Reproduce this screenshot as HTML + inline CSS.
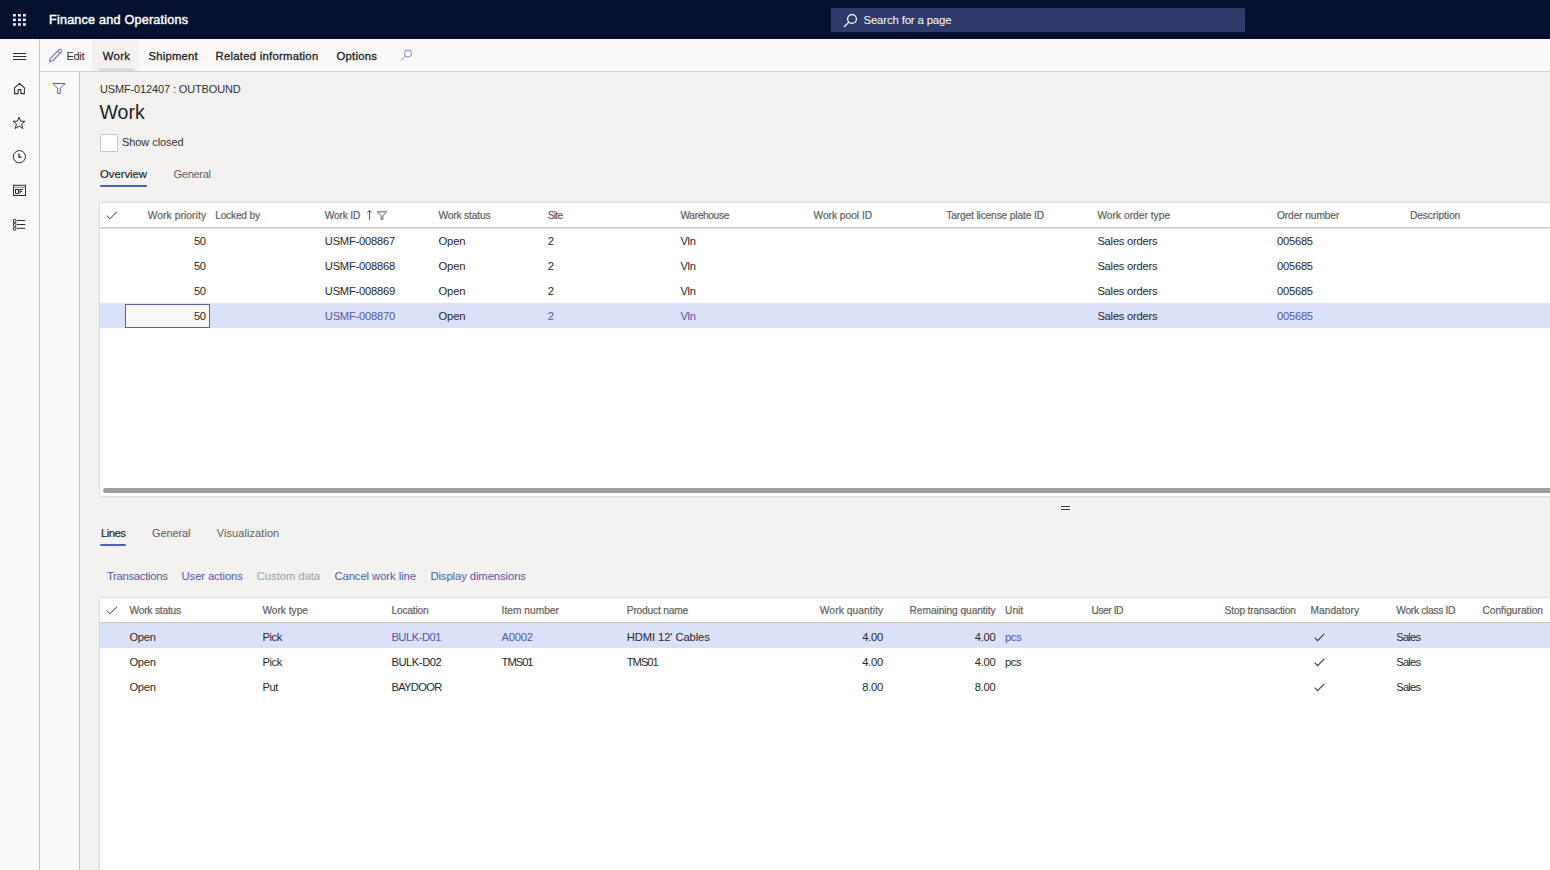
<!DOCTYPE html>
<html><head><meta charset="utf-8">
<style>
*{box-sizing:border-box;margin:0;padding:0}
html,body{width:1550px;height:870px;overflow:hidden;font-family:"Liberation Sans",sans-serif;background:#f3f2f1;color:#201f1e}
.a{position:absolute;white-space:nowrap}
.b{position:absolute}
</style></head><body>
<div class="b" style="left:0;top:0;width:1550px;height:39px;background:#06102f"></div>
<svg class="b" style="left:13px;top:14px" width="13" height="12" viewBox="0 0 13 12" fill="#fff"><rect x="0" y="0" width="2.8" height="2.5"/><rect x="5" y="0" width="2.8" height="2.5"/><rect x="10" y="0" width="2.8" height="2.5"/><rect x="0" y="4.6" width="2.8" height="2.5"/><rect x="5" y="4.6" width="2.8" height="2.5"/><rect x="10" y="4.6" width="2.8" height="2.5"/><rect x="0" y="9.2" width="2.8" height="2.5"/><rect x="5" y="9.2" width="2.8" height="2.5"/><rect x="10" y="9.2" width="2.8" height="2.5"/></svg>
<div class="a" style="left:49.0px;top:13.8px;font-size:12.6px;line-height:12.6px;color:#fff;letter-spacing:0.218px;-webkit-text-stroke:0.45px #fff;">Finance and Operations</div>
<div class="b" style="left:831px;top:7.5px;width:414px;height:24.2px;background:#2f3b6a;border-radius:1.5px"></div>
<svg class="b" style="left:842px;top:12px" width="16" height="16" viewBox="0 0 16 16" fill="none" stroke="#fff" stroke-width="1.3"><circle cx="10" cy="7" r="4.4"/><line x1="6.9" y1="10.1" x2="2" y2="15"/></svg>
<div class="a" style="left:863.5px;top:14.8px;font-size:11.4px;line-height:11.4px;color:#fff;letter-spacing:-0.160px;">Search for a page</div>
<div class="b" style="left:0;top:39px;width:40px;height:831px;background:#faf9f8;border-right:1px solid #c8c6c4"></div>
<div class="b" style="left:40px;top:39px;width:1510px;height:33px;background:#faf9f8;border-bottom:1px solid #d2d0ce"></div>
<div class="b" style="left:40px;top:72px;width:40px;height:798px;background:#faf9f8;border-right:1px solid #c8c6c4"></div>
<svg class="b" style="left:12px;top:50px" width="16" height="12" viewBox="0 0 16 12" stroke="#2f2a38" stroke-width="1"><line x1="1" y1="3.5" x2="14.3" y2="3.5"/><line x1="1" y1="6.5" x2="14.3" y2="6.5"/><line x1="1" y1="9.5" x2="14.3" y2="9.5"/></svg>
<svg class="b" style="left:12px;top:82px" width="15" height="14" viewBox="0 0 15 14" fill="none" stroke="#2f2a38" stroke-width="1.05" stroke-linejoin="round"><path d="M2 6.3 L7.5 1.3 L13 6.3 M2.6 5.8 V11.6 H6.1 V7.6 H8.9 V11.6 H12.4 V5.8"/></svg>
<svg class="b" style="left:12px;top:116px" width="14" height="14" viewBox="0 0 14 14" fill="none" stroke="#2f2a38" stroke-width="1"><path d="M7 1 L8.6 5.2 L13 5.3 L9.5 8.1 L10.8 12.6 L7 10 L3.2 12.6 L4.5 8.1 L1 5.3 L5.4 5.2 Z"/></svg>
<svg class="b" style="left:12px;top:149px" width="15" height="15" viewBox="0 0 15 15" fill="none" stroke="#2f2a38" stroke-width="1"><circle cx="7.4" cy="7.7" r="6.1"/><path d="M7 4.6 V8 H9.3" stroke-width="1.3"/></svg>
<svg class="b" style="left:12px;top:184px" width="15" height="13" viewBox="0 0 15 13" fill="none" stroke="#2f2a38" stroke-width="1"><rect x="1.5" y="1.3" width="12" height="10.2"/><line x1="1.5" y1="3.3" x2="13.5" y2="3.3" stroke="#8a8886"/><rect x="3.5" y="5.5" width="3" height="4"/><path d="M8 9.5 V5.5 H11 M8 7.5 H10"/></svg>
<svg class="b" style="left:12px;top:218px" width="15" height="14" viewBox="0 0 15 14" fill="none" stroke="#2f2a38" stroke-width="1"><rect x="1.5" y="1.5" width="2.4" height="3.2" rx="0.6"/><rect x="1.5" y="5.2" width="2.4" height="3.2" rx="0.6"/><rect x="1.5" y="8.9" width="2.4" height="3.2" rx="0.6"/><line x1="5" y1="2.5" x2="13.2" y2="2.5"/><line x1="5" y1="6.5" x2="13.2" y2="6.5"/><line x1="5" y1="10.3" x2="13.2" y2="10.3"/></svg>
<svg class="b" style="left:48px;top:48px" width="15" height="15" viewBox="0 0 15 15" fill="none" stroke="#7377c6" stroke-width="1.1"><path d="M1.5 13.5 L2.6 10 L10.8 1.8 Q12 0.8 13.1 1.9 Q14.2 3 13.2 4.2 L5 12.4 Z M9.6 3 L12 5.4"/></svg>
<div class="a" style="left:66.5px;top:51.0px;font-size:11.2px;line-height:11.2px;color:#323130;letter-spacing:-0.427px;">Edit</div>
<div class="b" style="left:92px;top:40px;width:47px;height:31px;background:#f3f2f1"></div>
<div class="b" style="left:99px;top:68px;width:35px;height:3px;background:#dedcda"></div>
<div class="a" style="left:102.8px;top:51.2px;font-size:11.3px;line-height:11.3px;color:#201f1e;letter-spacing:0.348px;-webkit-text-stroke:0.3px #201f1e;">Work</div>
<div class="a" style="left:148.4px;top:51.2px;font-size:11.3px;line-height:11.3px;color:#201f1e;letter-spacing:0.224px;-webkit-text-stroke:0.3px #201f1e;">Shipment</div>
<div class="a" style="left:215.6px;top:51.2px;font-size:11.3px;line-height:11.3px;color:#201f1e;letter-spacing:0.257px;-webkit-text-stroke:0.3px #201f1e;">Related information</div>
<div class="a" style="left:336.5px;top:51.2px;font-size:11.3px;line-height:11.3px;color:#201f1e;letter-spacing:0.244px;-webkit-text-stroke:0.3px #201f1e;">Options</div>
<svg class="b" style="left:400px;top:49px" width="13" height="12" viewBox="0 0 13 12" fill="none" stroke="#7d80d2" stroke-width="1"><circle cx="8" cy="4.5" r="3.6"/><line x1="5.4" y1="7.1" x2="1" y2="11.5"/></svg>
<svg class="b" style="left:52px;top:82px" width="14" height="13" viewBox="0 0 14 13" fill="none" stroke="#5558b8" stroke-width="1"><path d="M1 1.5 H13 L8.3 6.3 V11.5 H5.7 V6.3 Z"/></svg>
<div class="a" style="left:100.0px;top:84.1px;font-size:11px;line-height:11px;color:#323130;letter-spacing:-0.141px;">USMF-012407 : OUTBOUND</div>
<div class="a" style="left:99.5px;top:102.5px;font-size:19.5px;line-height:19.5px;color:#201f1e;">Work</div>
<div class="b" style="left:100px;top:134px;width:18px;height:18px;background:#fff;border:1px solid #c8c6c4;border-radius:1px"></div>
<div class="a" style="left:122.0px;top:136.6px;font-size:11px;line-height:11px;color:#323130;letter-spacing:-0.067px;">Show closed</div>
<div class="a" style="left:100.0px;top:169.0px;font-size:11.3px;line-height:11.3px;color:#201f1e;letter-spacing:-0.013px;-webkit-text-stroke:0.15px #201f1e;">Overview</div>
<div class="b" style="left:100px;top:184.5px;width:47px;height:2.5px;background:#4f5bbf;border-radius:1px"></div>
<div class="a" style="left:173.5px;top:169.0px;font-size:11px;line-height:11px;color:#605e5c;letter-spacing:-0.273px;">General</div>
<div class="b" style="left:100px;top:203px;width:1450px;height:293px;background:#fff;box-shadow:0 0 2px rgba(0,0,0,.28)"></div>
<div class="b" style="left:100px;top:226.5px;width:1450px;height:1px;background:#c8c6c4"></div>
<div class="b" style="left:100px;top:227.5px;width:1450px;height:1px;background:#e6e4e2"></div>
<div class="b" style="left:100px;top:303px;width:1450px;height:25px;background:#dae1f8"></div>
<div class="b" style="left:125px;top:303.5px;width:85px;height:24.5px;background:#faf9f8;border:1px solid #5a5ea8"></div>
<div class="b" style="left:103px;top:488px;width:1452px;height:4.5px;background:#9e9e9e;border-radius:2.5px"></div>
<svg class="b" style="left:106px;top:211px" width="12" height="9" viewBox="0 0 12 9" fill="none" stroke="#323130" stroke-width="1"><path d="M0.8 4.5 L3.8 7.8 L11 0.8"/></svg>
<div class="a" style="right:1343.9px;top:211.0px;font-size:10.2px;line-height:10.2px;color:#605e5c;letter-spacing:0.101px;-webkit-text-stroke:0.2px #605e5c;">Work priority</div>
<div class="a" style="left:215.2px;top:211.0px;font-size:10.2px;line-height:10.2px;color:#605e5c;letter-spacing:-0.207px;-webkit-text-stroke:0.2px #605e5c;">Locked by</div>
<div class="a" style="left:324.8px;top:211.0px;font-size:10.2px;line-height:10.2px;color:#605e5c;letter-spacing:-0.168px;-webkit-text-stroke:0.2px #605e5c;">Work ID</div>
<div class="a" style="left:438.4px;top:211.0px;font-size:10.2px;line-height:10.2px;color:#605e5c;letter-spacing:-0.139px;-webkit-text-stroke:0.2px #605e5c;">Work status</div>
<div class="a" style="left:547.7px;top:211.0px;font-size:10.2px;line-height:10.2px;color:#605e5c;letter-spacing:-0.688px;-webkit-text-stroke:0.2px #605e5c;">Site</div>
<div class="a" style="left:680.5px;top:211.0px;font-size:10.2px;line-height:10.2px;color:#605e5c;letter-spacing:-0.365px;-webkit-text-stroke:0.2px #605e5c;">Warehouse</div>
<div class="a" style="left:813.5px;top:211.0px;font-size:10.2px;line-height:10.2px;color:#605e5c;letter-spacing:-0.009px;-webkit-text-stroke:0.2px #605e5c;">Work pool ID</div>
<div class="a" style="left:946.2px;top:211.0px;font-size:10.2px;line-height:10.2px;color:#605e5c;letter-spacing:-0.136px;-webkit-text-stroke:0.2px #605e5c;">Target license plate ID</div>
<div class="a" style="left:1097.4px;top:211.0px;font-size:10.2px;line-height:10.2px;color:#605e5c;letter-spacing:0.029px;-webkit-text-stroke:0.2px #605e5c;">Work order type</div>
<div class="a" style="left:1277.0px;top:211.0px;font-size:10.2px;line-height:10.2px;color:#605e5c;letter-spacing:-0.102px;-webkit-text-stroke:0.2px #605e5c;">Order number</div>
<div class="a" style="left:1409.9px;top:211.0px;font-size:10.2px;line-height:10.2px;color:#605e5c;letter-spacing:-0.057px;-webkit-text-stroke:0.2px #605e5c;">Description</div>
<svg class="b" style="left:366px;top:209px" width="7" height="11" viewBox="0 0 7 11" fill="none" stroke="#605e5c" stroke-width="1"><path d="M3.5 10.8 V1.5 M1.3 3.7 L3.5 1.3 L5.7 3.7"/></svg>
<svg class="b" style="left:377px;top:209.5px" width="10" height="10" viewBox="0 0 10 10" fill="none" stroke="#605e5c" stroke-width="1"><path d="M0.5 1.8 H9.5 L5.9 5.8 V9.3 H4.1 V5.8 Z"/></svg>
<div class="a" style="right:1344.5px;top:236.2px;font-size:11.2px;line-height:11.2px;color:#292827;letter-spacing:-0.453px;">50</div>
<div class="a" style="left:324.8px;top:236.2px;font-size:11.2px;line-height:11.2px;color:#292827;letter-spacing:-0.237px;">USMF-008867</div>
<div class="a" style="left:438.4px;top:236.2px;font-size:11.2px;line-height:11.2px;color:#292827;letter-spacing:-0.092px;">Open</div>
<div class="a" style="left:547.7px;top:236.2px;font-size:11.2px;line-height:11.2px;color:#292827;">2</div>
<div class="a" style="left:680.5px;top:236.2px;font-size:11.2px;line-height:11.2px;color:#292827;letter-spacing:-0.386px;">Vln</div>
<div class="a" style="left:1097.4px;top:236.2px;font-size:11.2px;line-height:11.2px;color:#292827;letter-spacing:-0.228px;">Sales orders</div>
<div class="a" style="left:1277.0px;top:236.2px;font-size:11.2px;line-height:11.2px;color:#292827;letter-spacing:-0.249px;">005685</div>
<div class="a" style="right:1344.5px;top:261.2px;font-size:11.2px;line-height:11.2px;color:#292827;letter-spacing:-0.453px;">50</div>
<div class="a" style="left:324.8px;top:261.2px;font-size:11.2px;line-height:11.2px;color:#292827;letter-spacing:-0.237px;">USMF-008868</div>
<div class="a" style="left:438.4px;top:261.2px;font-size:11.2px;line-height:11.2px;color:#292827;letter-spacing:-0.092px;">Open</div>
<div class="a" style="left:547.7px;top:261.2px;font-size:11.2px;line-height:11.2px;color:#292827;">2</div>
<div class="a" style="left:680.5px;top:261.2px;font-size:11.2px;line-height:11.2px;color:#292827;letter-spacing:-0.386px;">Vln</div>
<div class="a" style="left:1097.4px;top:261.2px;font-size:11.2px;line-height:11.2px;color:#292827;letter-spacing:-0.228px;">Sales orders</div>
<div class="a" style="left:1277.0px;top:261.2px;font-size:11.2px;line-height:11.2px;color:#292827;letter-spacing:-0.249px;">005685</div>
<div class="a" style="right:1344.5px;top:286.2px;font-size:11.2px;line-height:11.2px;color:#292827;letter-spacing:-0.453px;">50</div>
<div class="a" style="left:324.8px;top:286.2px;font-size:11.2px;line-height:11.2px;color:#292827;letter-spacing:-0.237px;">USMF-008869</div>
<div class="a" style="left:438.4px;top:286.2px;font-size:11.2px;line-height:11.2px;color:#292827;letter-spacing:-0.092px;">Open</div>
<div class="a" style="left:547.7px;top:286.2px;font-size:11.2px;line-height:11.2px;color:#292827;">2</div>
<div class="a" style="left:680.5px;top:286.2px;font-size:11.2px;line-height:11.2px;color:#292827;letter-spacing:-0.386px;">Vln</div>
<div class="a" style="left:1097.4px;top:286.2px;font-size:11.2px;line-height:11.2px;color:#292827;letter-spacing:-0.228px;">Sales orders</div>
<div class="a" style="left:1277.0px;top:286.2px;font-size:11.2px;line-height:11.2px;color:#292827;letter-spacing:-0.249px;">005685</div>
<div class="a" style="right:1344.5px;top:311.2px;font-size:11.2px;line-height:11.2px;color:#292827;letter-spacing:-0.453px;">50</div>
<div class="a" style="left:324.8px;top:311.2px;font-size:11.2px;line-height:11.2px;color:#5356b0;letter-spacing:-0.237px;">USMF-008870</div>
<div class="a" style="left:438.4px;top:311.2px;font-size:11.2px;line-height:11.2px;color:#292827;letter-spacing:-0.092px;">Open</div>
<div class="a" style="left:547.7px;top:311.2px;font-size:11.2px;line-height:11.2px;color:#5356b0;">2</div>
<div class="a" style="left:680.5px;top:311.2px;font-size:11.2px;line-height:11.2px;color:#5356b0;letter-spacing:-0.386px;">Vln</div>
<div class="a" style="left:1097.4px;top:311.2px;font-size:11.2px;line-height:11.2px;color:#292827;letter-spacing:-0.228px;">Sales orders</div>
<div class="a" style="left:1277.0px;top:311.2px;font-size:11.2px;line-height:11.2px;color:#5356b0;letter-spacing:-0.249px;">005685</div>
<div class="b" style="left:1061px;top:506px;width:9px;height:1px;background:#3b3a39"></div>
<div class="b" style="left:1061px;top:509px;width:9px;height:1px;background:#3b3a39"></div>
<div class="a" style="left:100.9px;top:527.6px;font-size:11.3px;line-height:11.3px;color:#201f1e;letter-spacing:-0.479px;-webkit-text-stroke:0.15px #201f1e;">Lines</div>
<div class="b" style="left:100px;top:544px;width:26px;height:2px;background:#4f5bbf;border-radius:1px"></div>
<div class="a" style="left:152.0px;top:527.9px;font-size:11px;line-height:11px;color:#605e5c;letter-spacing:-0.123px;">General</div>
<div class="a" style="left:216.8px;top:527.9px;font-size:11px;line-height:11px;color:#605e5c;letter-spacing:0.070px;">Visualization</div>
<div class="a" style="left:106.9px;top:570.5px;font-size:11.3px;line-height:11.3px;color:#5356b0;letter-spacing:-0.306px;">Transactions</div>
<div class="a" style="left:181.6px;top:570.5px;font-size:11.3px;line-height:11.3px;color:#5356b0;letter-spacing:-0.136px;">User actions</div>
<div class="a" style="left:256.8px;top:570.5px;font-size:11.3px;line-height:11.3px;color:#a19f9d;letter-spacing:-0.086px;">Custom data</div>
<div class="a" style="left:334.4px;top:570.5px;font-size:11.3px;line-height:11.3px;color:#5356b0;letter-spacing:-0.086px;">Cancel work line</div>
<div class="a" style="left:430.4px;top:570.5px;font-size:11.3px;line-height:11.3px;color:#5356b0;letter-spacing:-0.102px;">Display dimensions</div>
<div class="b" style="left:100px;top:598px;width:1450px;height:280px;background:#fff;box-shadow:0 0 2px rgba(0,0,0,.28)"></div>
<div class="b" style="left:100px;top:621.5px;width:1450px;height:1px;background:#c8c6c4"></div>
<div class="b" style="left:100px;top:622.5px;width:1450px;height:1px;background:#e6e4e2"></div>
<div class="b" style="left:100px;top:623px;width:1450px;height:25px;background:#dae1f8"></div>
<svg class="b" style="left:106px;top:606px" width="12" height="9" viewBox="0 0 12 9" fill="none" stroke="#323130" stroke-width="1"><path d="M0.8 4.5 L3.8 7.8 L11 0.8"/></svg>
<div class="a" style="left:129.4px;top:606.2px;font-size:10.2px;line-height:10.2px;color:#605e5c;letter-spacing:-0.179px;-webkit-text-stroke:0.2px #605e5c;">Work status</div>
<div class="a" style="left:262.4px;top:606.2px;font-size:10.2px;line-height:10.2px;color:#605e5c;letter-spacing:-0.009px;-webkit-text-stroke:0.2px #605e5c;">Work type</div>
<div class="a" style="left:391.4px;top:606.2px;font-size:10.2px;line-height:10.2px;color:#605e5c;letter-spacing:-0.162px;-webkit-text-stroke:0.2px #605e5c;">Location</div>
<div class="a" style="left:501.6px;top:606.2px;font-size:10.2px;line-height:10.2px;color:#605e5c;letter-spacing:0.011px;-webkit-text-stroke:0.2px #605e5c;">Item number</div>
<div class="a" style="left:626.8px;top:606.2px;font-size:10.2px;line-height:10.2px;color:#605e5c;letter-spacing:-0.194px;-webkit-text-stroke:0.2px #605e5c;">Product name</div>
<div class="a" style="right:666.7px;top:606.2px;font-size:10.2px;line-height:10.2px;color:#605e5c;letter-spacing:0.108px;-webkit-text-stroke:0.2px #605e5c;">Work quantity</div>
<div class="a" style="right:554.4px;top:606.2px;font-size:10.2px;line-height:10.2px;color:#605e5c;letter-spacing:-0.066px;-webkit-text-stroke:0.2px #605e5c;">Remaining quantity</div>
<div class="a" style="left:1005.0px;top:606.2px;font-size:10.2px;line-height:10.2px;color:#605e5c;letter-spacing:0.025px;-webkit-text-stroke:0.2px #605e5c;">Unit</div>
<div class="a" style="left:1091.5px;top:606.2px;font-size:10.2px;line-height:10.2px;color:#605e5c;letter-spacing:-0.439px;-webkit-text-stroke:0.2px #605e5c;">User ID</div>
<div class="a" style="left:1224.6px;top:606.2px;font-size:10.2px;line-height:10.2px;color:#605e5c;letter-spacing:-0.155px;-webkit-text-stroke:0.2px #605e5c;">Stop transaction</div>
<div class="a" style="left:1310.4px;top:606.2px;font-size:10.2px;line-height:10.2px;color:#605e5c;letter-spacing:0.057px;-webkit-text-stroke:0.2px #605e5c;">Mandatory</div>
<div class="a" style="left:1396.3px;top:606.2px;font-size:10.2px;line-height:10.2px;color:#605e5c;letter-spacing:-0.296px;-webkit-text-stroke:0.2px #605e5c;">Work class ID</div>
<div class="a" style="left:1482.4px;top:606.2px;font-size:10.2px;line-height:10.2px;color:#605e5c;-webkit-text-stroke:0.2px #605e5c;">Configuration</div>
<div class="a" style="left:129.4px;top:631.5px;font-size:11.2px;line-height:11.2px;color:#292827;letter-spacing:-0.225px;">Open</div>
<div class="a" style="left:262.4px;top:631.5px;font-size:11.2px;line-height:11.2px;color:#292827;letter-spacing:-0.414px;">Pick</div>
<div class="a" style="left:391.4px;top:631.5px;font-size:11.2px;line-height:11.2px;color:#5356b0;letter-spacing:-0.483px;">BULK-D01</div>
<div class="a" style="left:501.6px;top:631.5px;font-size:11.2px;line-height:11.2px;color:#5356b0;letter-spacing:-0.215px;">A0002</div>
<div class="a" style="left:626.8px;top:631.5px;font-size:11.2px;line-height:11.2px;color:#292827;letter-spacing:-0.087px;">HDMI 12&#x27; Cables</div>
<div class="a" style="right:667.1px;top:631.5px;font-size:11.2px;line-height:11.2px;color:#292827;letter-spacing:-0.260px;">4.00</div>
<div class="a" style="right:554.6px;top:631.5px;font-size:11.2px;line-height:11.2px;color:#292827;letter-spacing:-0.260px;">4.00</div>
<div class="a" style="left:1005.0px;top:631.5px;font-size:11.2px;line-height:11.2px;color:#5356b0;letter-spacing:-0.361px;">pcs</div>
<svg class="b" style="left:1313.5px;top:632.5px" width="11" height="9" viewBox="0 0 11 9" fill="none" stroke="#3b3a39" stroke-width="1.1"><path d="M0.7 4.6 L3.6 7.6 L10.3 0.9"/></svg>
<div class="a" style="left:1396.3px;top:631.5px;font-size:11.2px;line-height:11.2px;color:#292827;letter-spacing:-0.825px;">Sales</div>
<div class="a" style="left:129.4px;top:656.5px;font-size:11.2px;line-height:11.2px;color:#292827;letter-spacing:-0.225px;">Open</div>
<div class="a" style="left:262.4px;top:656.5px;font-size:11.2px;line-height:11.2px;color:#292827;letter-spacing:-0.414px;">Pick</div>
<div class="a" style="left:391.4px;top:656.5px;font-size:11.2px;line-height:11.2px;color:#292827;letter-spacing:-0.441px;">BULK-D02</div>
<div class="a" style="left:501.6px;top:656.5px;font-size:11.2px;line-height:11.2px;color:#292827;letter-spacing:-1.016px;">TMS01</div>
<div class="a" style="left:626.8px;top:656.5px;font-size:11.2px;line-height:11.2px;color:#292827;letter-spacing:-1.016px;">TMS01</div>
<div class="a" style="right:667.1px;top:656.5px;font-size:11.2px;line-height:11.2px;color:#292827;letter-spacing:-0.260px;">4.00</div>
<div class="a" style="right:554.6px;top:656.5px;font-size:11.2px;line-height:11.2px;color:#292827;letter-spacing:-0.260px;">4.00</div>
<div class="a" style="left:1005.0px;top:656.5px;font-size:11.2px;line-height:11.2px;color:#292827;letter-spacing:-0.361px;">pcs</div>
<svg class="b" style="left:1313.5px;top:657.5px" width="11" height="9" viewBox="0 0 11 9" fill="none" stroke="#3b3a39" stroke-width="1.1"><path d="M0.7 4.6 L3.6 7.6 L10.3 0.9"/></svg>
<div class="a" style="left:1396.3px;top:656.5px;font-size:11.2px;line-height:11.2px;color:#292827;letter-spacing:-0.825px;">Sales</div>
<div class="a" style="left:129.4px;top:681.5px;font-size:11.2px;line-height:11.2px;color:#292827;letter-spacing:-0.225px;">Open</div>
<div class="a" style="left:262.4px;top:681.5px;font-size:11.2px;line-height:11.2px;color:#292827;letter-spacing:-0.398px;">Put</div>
<div class="a" style="left:391.4px;top:681.5px;font-size:11.2px;line-height:11.2px;color:#292827;letter-spacing:-0.704px;">BAYDOOR</div>
<div class="a" style="right:667.1px;top:681.5px;font-size:11.2px;line-height:11.2px;color:#292827;letter-spacing:-0.260px;">8.00</div>
<div class="a" style="right:554.6px;top:681.5px;font-size:11.2px;line-height:11.2px;color:#292827;letter-spacing:-0.260px;">8.00</div>
<svg class="b" style="left:1313.5px;top:682.5px" width="11" height="9" viewBox="0 0 11 9" fill="none" stroke="#3b3a39" stroke-width="1.1"><path d="M0.7 4.6 L3.6 7.6 L10.3 0.9"/></svg>
<div class="a" style="left:1396.3px;top:681.5px;font-size:11.2px;line-height:11.2px;color:#292827;letter-spacing:-0.825px;">Sales</div>
</body></html>
